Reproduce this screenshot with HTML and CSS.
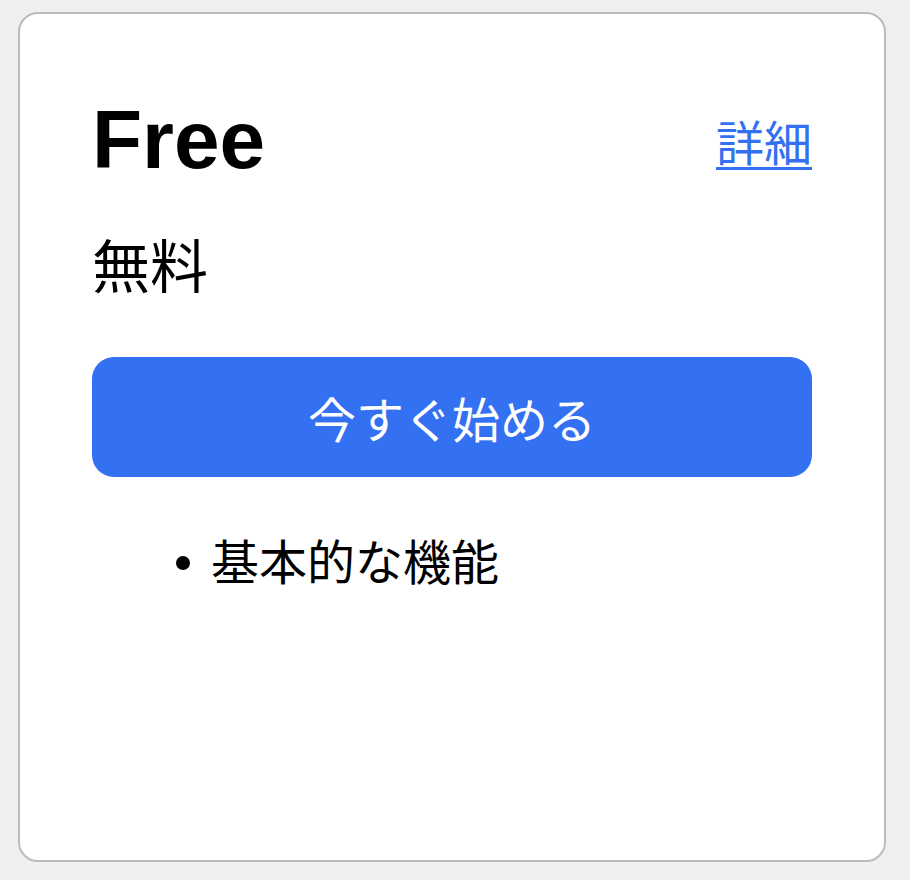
FILE: index.html
```html
<!DOCTYPE html>
<html lang="ja">
<head>
    <meta charset="UTF-8">
    <meta name="viewport" content="width=device-width, initial-scale=1.0">
    <title>Free プラン</title>
    <link rel="stylesheet" href="styles.css">
</head>
<body>
    <div class="plan-card">
        <div class="plan-header">
            <h1 class="plan-name">Free</h1>
            <a href="#" class="plan-link">詳細</a>
        </div>
        <p class="plan-price">無料</p>
        <button class="btn-start">今すぐ始める</button>
        <ul class="feature-list">
            <li>基本的な機能</li>
        </ul>
    </div>
</body>
</html>
```

FILE: styles.css
```css
* {
    margin: 0;
    padding: 0;
    box-sizing: border-box;
}

body {
    font-family: 'Liberation Sans', 'Noto Sans CJK JP', sans-serif;
    background: #f0f0f0;
    color: #000;
}

.plan-card {
    width: 868px;
    height: 850px;
    margin: 12px 0 0 18px;
    padding: 86px 72px 0;
    background: #fff;
    border: 2px solid #bbbbbb;
    border-radius: 20px;
}

.plan-header {
    display: flex;
    justify-content: space-between;
    align-items: center;
    height: 80px;
}

.plan-name {
    font-size: 82px;
    font-weight: bold;
    line-height: 1;
}

.plan-link {
    font-family: 'Noto Sans CJK JP', sans-serif;
    font-size: 48px;
    line-height: 1;
    color: #3370f2;
    text-decoration: underline;
    text-underline-offset: 6px;
    text-decoration-thickness: 3px;
}

.plan-price {
    font-family: 'Noto Sans CJK JP', sans-serif;
    font-size: 58px;
    line-height: 1;
    margin-top: 54px;
}

.btn-start {
    display: block;
    width: 100%;
    height: 120px;
    margin-top: 65px;
    border: none;
    border-radius: 22px;
    background: #3370f2;
    color: #fff;
    font-family: 'Noto Sans CJK JP', sans-serif;
    font-size: 48px;
    line-height: 1;
    cursor: pointer;
}

.feature-list {
    list-style: none;
    margin-top: 58px;
    padding-left: 84px;
    font-family: 'Noto Sans CJK JP', sans-serif;
    font-size: 48px;
    line-height: 1;
}

.feature-list li {
    display: flex;
    align-items: center;
    gap: 21px;
}

.feature-list li::before {
    content: "";
    flex: none;
    width: 14px;
    height: 14px;
    margin-top: 8px;
    border-radius: 50%;
    background: #000;
}
```
